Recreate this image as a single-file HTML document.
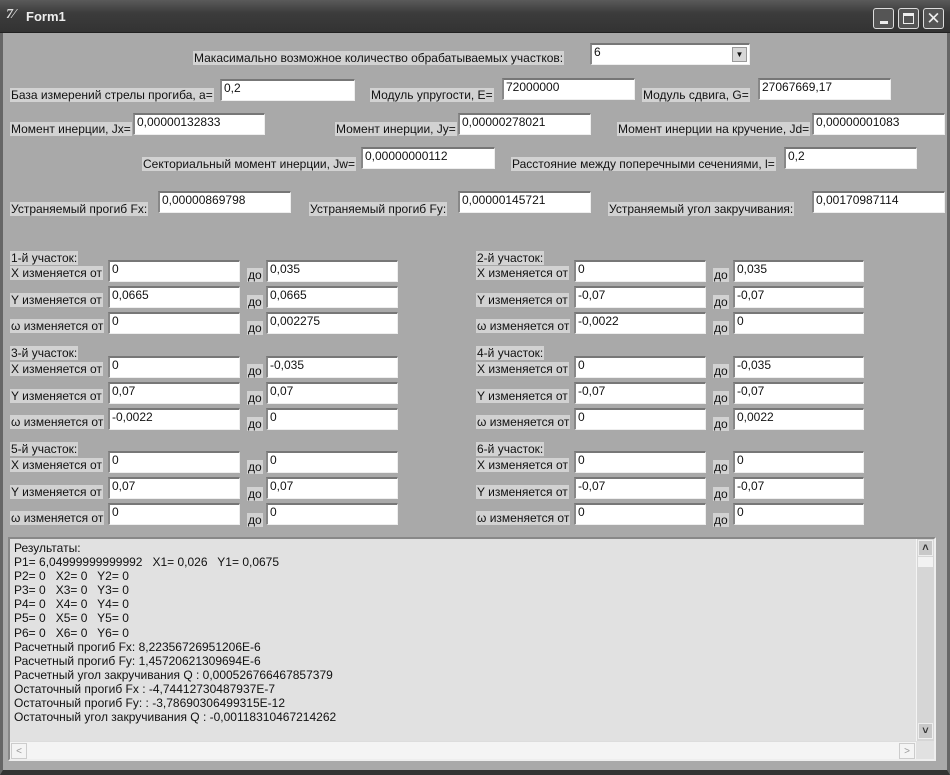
<!DOCTYPE html>
<html><head><meta charset="utf-8"><style>
*{margin:0;padding:0;box-sizing:border-box}
body{width:950px;height:775px;background:#a9a9a9;font-family:"Liberation Sans",sans-serif;font-size:12px;color:#111;position:relative;overflow:hidden}
.t{position:absolute;left:0;top:0;width:950px;height:33px;background:linear-gradient(#5a5a5a,#3c3c3c 40%,#333);border-bottom:1px solid #222}
.tt{position:absolute;left:26px;top:9px;color:#eee;font-weight:bold;font-size:13px}
.ic{position:absolute;left:6px;top:7px;color:#ddd;font-weight:bold;font-size:14px;font-style:italic;font-family:"Liberation Serif",serif}
.b{position:absolute;top:8px;width:21px;height:21px;border:1px solid #ddd;border-radius:3px;background:#555}
.l{position:absolute;background:#d2d2d2;height:14px;line-height:14px;padding:0 1px;white-space:nowrap}
.e{position:absolute;background:#fff;height:22px;border-top:2px solid #777;border-left:2px solid #888;border-bottom:1px solid #eee;border-right:1px solid #eee;padding:1px 2px;line-height:13px;white-space:nowrap}
.m{position:absolute;left:8px;top:537px;width:928px;height:224px;background:#e1e1e1;border:2px solid #888;border-right-color:#eee;border-bottom-color:#eee;padding:2px 4px;line-height:14.1px;font-size:12px}
.frame{position:absolute;left:0;top:33px;width:950px;height:742px;border-left:3px solid #666;border-right:3px solid #666;border-bottom:5px solid #333}
</style></head><body>
<div class="t"><span class="ic">7⁄</span><span class="tt">Form1</span>
<div class="b" style="left:873px"><div style="position:absolute;left:6px;top:12px;width:8px;height:3px;background:#eee"></div></div>
<div class="b" style="left:898px"><div style="position:absolute;left:4px;top:4px;width:11px;height:11px;border:1px solid #eee;border-top-width:3px"></div></div>
<div class="b" style="left:923px;color:#eee;font-size:17px;text-align:center;line-height:19px">✕</div>
</div>
<div class="frame"></div>

<div class="l" style="left:193px;top:51px">Макасимально возможное количество обрабатываемых участков:</div>
<div class="e" style="left:590px;top:43px;width:160px">6<div style="position:absolute;right:2px;top:2px;width:15px;height:15px;background:#d8d8d8;border:1px solid #999;font-size:8px;text-align:center;line-height:14px">▼</div></div>

<div class="l" style="left:10px;top:88px">База измерений стрелы прогиба, a=</div>
<div class="e" style="left:220px;top:79px;width:135px">0,2</div>
<div class="l" style="left:370px;top:88px">Модуль упругости, E=</div>
<div class="e" style="left:502px;top:78px;width:133px">72000000</div>
<div class="l" style="left:642px;top:88px">Модуль сдвига, G=</div>
<div class="e" style="left:758px;top:78px;width:133px">27067669,17</div>

<div class="l" style="left:10px;top:122px">Момент инерции, Jx=</div>
<div class="e" style="left:133px;top:113px;width:132px">0,00000132833</div>
<div class="l" style="left:335px;top:122px">Момент инерции, Jy=</div>
<div class="e" style="left:458px;top:113px;width:133px">0,00000278021</div>
<div class="l" style="left:617px;top:122px">Момент инерции на кручение, Jd=</div>
<div class="e" style="left:812px;top:113px;width:133px">0,00000001083</div>

<div class="l" style="left:142px;top:157px">Секториальный момент инерции, Jw=</div>
<div class="e" style="left:361px;top:147px;width:134px">0,00000000112</div>
<div class="l" style="left:511px;top:157px">Расстояние между поперечными сечениями, l=</div>
<div class="e" style="left:784px;top:147px;width:133px">0,2</div>

<div class="l" style="left:10px;top:202px">Устраняемый прогиб Fx:</div>
<div class="e" style="left:158px;top:191px;width:133px">0,00000869798</div>
<div class="l" style="left:309px;top:202px">Устраняемый прогиб Fy:</div>
<div class="e" style="left:458px;top:191px;width:133px">0,00000145721</div>
<div class="l" style="left:608px;top:202px">Устраняемый угол закручивания:</div>
<div class="e" style="left:812px;top:191px;width:133px">0,00170987114</div>

<div class="l" style="left:10px;top:251px">1-й участок:</div>
<div class="l" style="left:10px;top:266px">X изменяется от</div><div class="e" style="left:108px;top:260px;width:132px">0</div>
<div class="l" style="left:247px;top:268px">до</div><div class="e" style="left:266px;top:260px;width:132px">0,035</div>
<div class="l" style="left:10px;top:293px">Y изменяется от</div><div class="e" style="left:108px;top:286px;width:132px">0,0665</div>
<div class="l" style="left:247px;top:295px">до</div><div class="e" style="left:266px;top:286px;width:132px">0,0665</div>
<div class="l" style="left:10px;top:319px">ω изменяется от</div><div class="e" style="left:108px;top:312px;width:132px">0</div>
<div class="l" style="left:247px;top:321px">до</div><div class="e" style="left:266px;top:312px;width:132px">0,002275</div>

<div class="l" style="left:10px;top:346px">3-й участок:</div>
<div class="l" style="left:10px;top:362px">X изменяется от</div><div class="e" style="left:108px;top:356px;width:132px">0</div>
<div class="l" style="left:247px;top:364px">до</div><div class="e" style="left:266px;top:356px;width:132px">-0,035</div>
<div class="l" style="left:10px;top:389px">Y изменяется от</div><div class="e" style="left:108px;top:382px;width:132px">0,07</div>
<div class="l" style="left:247px;top:391px">до</div><div class="e" style="left:266px;top:382px;width:132px">0,07</div>
<div class="l" style="left:10px;top:415px">ω изменяется от</div><div class="e" style="left:108px;top:408px;width:132px">-0,0022</div>
<div class="l" style="left:247px;top:417px">до</div><div class="e" style="left:266px;top:408px;width:132px">0</div>

<div class="l" style="left:10px;top:442px">5-й участок:</div>
<div class="l" style="left:10px;top:458px">X изменяется от</div><div class="e" style="left:108px;top:451px;width:132px">0</div>
<div class="l" style="left:247px;top:460px">до</div><div class="e" style="left:266px;top:451px;width:132px">0</div>
<div class="l" style="left:10px;top:485px">Y изменяется от</div><div class="e" style="left:108px;top:477px;width:132px">0,07</div>
<div class="l" style="left:247px;top:487px">до</div><div class="e" style="left:266px;top:477px;width:132px">0,07</div>
<div class="l" style="left:10px;top:511px">ω изменяется от</div><div class="e" style="left:108px;top:503px;width:132px">0</div>
<div class="l" style="left:247px;top:513px">до</div><div class="e" style="left:266px;top:503px;width:132px">0</div>

<div class="l" style="left:476px;top:251px">2-й участок:</div>
<div class="l" style="left:476px;top:266px">X изменяется от</div><div class="e" style="left:574px;top:260px;width:132px">0</div>
<div class="l" style="left:713px;top:268px">до</div><div class="e" style="left:733px;top:260px;width:131px">0,035</div>
<div class="l" style="left:476px;top:293px">Y изменяется от</div><div class="e" style="left:574px;top:286px;width:132px">-0,07</div>
<div class="l" style="left:713px;top:295px">до</div><div class="e" style="left:733px;top:286px;width:131px">-0,07</div>
<div class="l" style="left:476px;top:319px">ω изменяется от</div><div class="e" style="left:574px;top:312px;width:132px">-0,0022</div>
<div class="l" style="left:713px;top:321px">до</div><div class="e" style="left:733px;top:312px;width:131px">0</div>

<div class="l" style="left:476px;top:346px">4-й участок:</div>
<div class="l" style="left:476px;top:362px">X изменяется от</div><div class="e" style="left:574px;top:356px;width:132px">0</div>
<div class="l" style="left:713px;top:364px">до</div><div class="e" style="left:733px;top:356px;width:131px">-0,035</div>
<div class="l" style="left:476px;top:389px">Y изменяется от</div><div class="e" style="left:574px;top:382px;width:132px">-0,07</div>
<div class="l" style="left:713px;top:391px">до</div><div class="e" style="left:733px;top:382px;width:131px">-0,07</div>
<div class="l" style="left:476px;top:415px">ω изменяется от</div><div class="e" style="left:574px;top:408px;width:132px">0</div>
<div class="l" style="left:713px;top:417px">до</div><div class="e" style="left:733px;top:408px;width:131px">0,0022</div>

<div class="l" style="left:476px;top:442px">6-й участок:</div>
<div class="l" style="left:476px;top:458px">X изменяется от</div><div class="e" style="left:574px;top:451px;width:132px">0</div>
<div class="l" style="left:713px;top:460px">до</div><div class="e" style="left:733px;top:451px;width:131px">0</div>
<div class="l" style="left:476px;top:485px">Y изменяется от</div><div class="e" style="left:574px;top:477px;width:132px">-0,07</div>
<div class="l" style="left:713px;top:487px">до</div><div class="e" style="left:733px;top:477px;width:131px">-0,07</div>
<div class="l" style="left:476px;top:511px">ω изменяется от</div><div class="e" style="left:574px;top:503px;width:132px">0</div>
<div class="l" style="left:713px;top:513px">до</div><div class="e" style="left:733px;top:503px;width:131px">0</div>

<div class="m">Результаты:<br>P1= 6,04999999999992&nbsp;&nbsp; X1= 0,026&nbsp;&nbsp; Y1= 0,0675<br>P2= 0&nbsp;&nbsp; X2= 0&nbsp;&nbsp; Y2= 0<br>P3= 0&nbsp;&nbsp; X3= 0&nbsp;&nbsp; Y3= 0<br>P4= 0&nbsp;&nbsp; X4= 0&nbsp;&nbsp; Y4= 0<br>P5= 0&nbsp;&nbsp; X5= 0&nbsp;&nbsp; Y5= 0<br>P6= 0&nbsp;&nbsp; X6= 0&nbsp;&nbsp; Y6= 0<br>Расчетный прогиб Fx: 8,22356726951206E-6<br>Расчетный прогиб Fy: 1,45720621309694E-6<br>Расчетный угол закручивания Q : 0,000526766467857379<br>Остаточный прогиб Fx : -4,74412730487937E-7<br>Остаточный прогиб Fy: : -3,78690306499315E-12<br>Остаточный угол закручивания Q : -0,00118310467214262
<div style="position:absolute;left:0;top:202px;width:906px;height:18px;background:#f4f4f4;border-top:1px solid #ddd"><div style="position:absolute;left:1px;top:1px;width:16px;height:16px;border:1px solid #ccc;color:#999;font-size:10px;text-align:center;line-height:15px">&lt;</div><div style="position:absolute;right:1px;top:1px;width:16px;height:16px;border:1px solid #ccc;color:#999;font-size:10px;text-align:center;line-height:15px">&gt;</div></div>
<div style="position:absolute;left:906px;top:0;width:18px;height:202px;background:#d6d6d6;border-left:1px solid #f4f4f4">
<div style="position:absolute;left:1px;top:1px;width:15px;height:16px;background:#c8c8c8;border:1px solid #eee;font-size:11px;text-align:center;line-height:14px;font-weight:bold;color:#333">˄</div>
<div style="position:absolute;left:1px;top:18px;width:15px;height:10px;background:#f2f2f2"></div>
<div style="position:absolute;left:1px;top:184px;width:15px;height:16px;background:#c8c8c8;border:1px solid #eee;font-size:11px;text-align:center;line-height:14px;font-weight:bold;color:#333">˅</div>
</div>
</div>
</body></html>
